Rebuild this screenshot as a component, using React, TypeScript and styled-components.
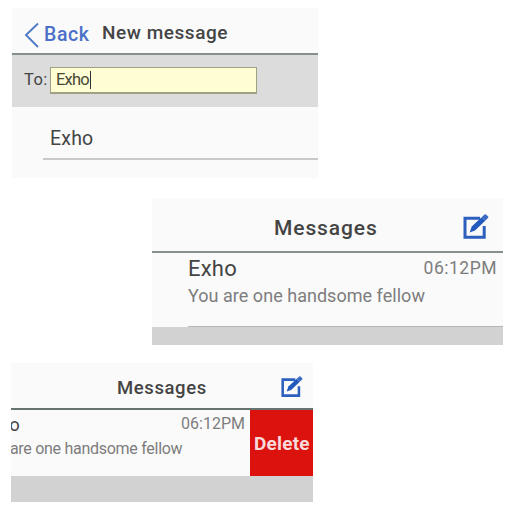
import React from 'react';
import styled, { createGlobalStyle } from 'styled-components';

const Global = createGlobalStyle`
  * { box-sizing: border-box; }
  body { margin: 0; background: #fff; font-family: Roboto, "Liberation Sans", sans-serif; }
`;

const Page = styled.main`
  width: 512px;
  height: 512px;
  padding-top: 8px;
  display: flex;
  flex-direction: column;
  overflow: hidden;
`;

const Panel = styled.section<{ $w: number; $h: number; $left: number; $gap: number }>`
  flex: none;
  display: flex;
  flex-direction: column;
  width: ${p => p.$w}px;
  height: ${p => p.$h}px;
  margin: 0 0 ${p => p.$gap}px ${p => p.$left}px;
  background: #fafafa;
  overflow: hidden;
`;

const Header = styled.header<{ $h: number; $pad: number; $line?: string }>`
  flex: none;
  display: flex;
  align-items: flex-start;
  height: ${p => p.$h}px;
  padding-left: ${p => p.$pad}px;
  border-bottom: 2px solid ${p => p.$line ?? '#858f8d'};
`;

const Label = styled.span<{
  $size: number; $space?: number; $weight?: number; $color?: string; $top?: number; $left?: number;
}>`
  flex: none;
  display: block;
  white-space: pre;
  line-height: 24px;
  font-size: ${p => p.$size}px;
  letter-spacing: ${p => p.$space ?? 0}px;
  font-weight: ${p => p.$weight ?? 400};
  color: ${p => p.$color ?? '#444'};
  margin-top: ${p => p.$top ?? 0}px;
  margin-left: ${p => p.$left ?? 0}px;
`;

const BackButton = styled.a`
  display: flex;
  align-items: flex-start;
  width: 78px;
`;

const Chevron = styled.svg`
  width: 15px;
  height: 26px;
  margin: 14px 5px 0 0;
`;

const Recipient = styled.div`
  flex: none;
  display: flex;
  height: 52px;
  padding: 12px 0 0 12px;
  background: #dcdcdc;
`;

const RecipientLabel = styled.div`
  width: 26px;
`;

const Field = styled.div`
  display: flex;
  align-items: flex-start;
  width: 207px;
  height: 27px;
  padding-left: 5px;
  border: 1.5px solid #a0a083;
  border-bottom-width: 2px;
  background: #fffdd4;
`;

const Caret = styled.i`
  width: 1px;
  height: 18px;
  margin: 3px 0 0 1px;
  background: #333;
`;

const Suggestion = styled.div`
  display: flex;
  height: 53px;
  margin-left: 31px;
  padding-left: 7px;
  border-bottom: 2px solid #c8c9c9;
`;

const Conversation = styled.div<{ $h: number }>`
  flex: none;
  display: flex;
  height: ${p => p.$h}px;
`;

const Body = styled.div<{ $shift: number; $line?: boolean }>`
  flex: 1;
  min-width: 0;
  margin-left: ${p => p.$shift}px;
  border-bottom: ${p => (p.$line ? '1px solid #b3b4b4' : 'none')};
`;

const TopLine = styled.div<{ $right: number }>`
  display: flex;
  justify-content: space-between;
  height: 27px;
  padding-right: ${p => p.$right}px;
`;

const Footer = styled.div`
  flex: 1;
  background: #d2d2d2;
`;

const DeleteButton = styled.button`
  flex: none;
  width: 63px;
  height: 67px;
  padding: 0 0 0 4px;
  border: 0;
  background: #dc120f;
  font-family: inherit;
  text-align: left;
`;

const ComposeSvg = styled.svg<{ $w: number; $top: number; $left: number }>`
  flex: none;
  width: ${p => p.$w}px;
  height: ${p => p.$w}px;
  margin: ${p => p.$top}px 0 0 ${p => p.$left}px;
`;

const Compose = (p: { $w: number; $top: number; $left: number }) => (
  <ComposeSvg viewBox="0 0 26 26" fill="none" {...p}>
    <path d="M17 4.3H2V23.2H21.2V12" stroke="#2c5fbe" strokeWidth="3" />
    <path d="M6.7 18.4L8.7 12.4L18.6 3.2L22.2 6.7L12 16.5Z" fill="#2358bd" />
    <path d="M18.6 3.2L21.5.6Q22.3 0 23 .6L25.1 2.6Q25.8 3.3 25 4.1L22.2 6.7Z" fill="#3b6bc3" />
  </ComposeSvg>
);

export default function App() {
  return (
    <>
      <Global />
      <Page>
        <Panel $w={306} $h={170} $left={12} $gap={20}>
          <Header $h={47} $pad={12}>
            <BackButton>
              <Chevron viewBox="0 0 15 26" fill="none">
                <path d="M14 1.5L2 13L14 25" stroke="#5079c7" strokeWidth="1.9" />
              </Chevron>
              <Label $size={19.5} $space={0.6} $weight={500} $color="#4c70c7" $top={15}>Back</Label>
            </BackButton>
            <Label $size={19} $space={0.55} $weight={500} $top={13}>New message</Label>
          </Header>
          <Recipient>
            <RecipientLabel><Label $size={16.5} $space={0.4} $top={1}>To:</Label></RecipientLabel>
            <Field>
              <Label $size={16.5} $space={-0.8} $color="#484835">Exho</Label>
              <Caret />
            </Field>
          </Recipient>
          <Suggestion>
            <Label $size={19.5} $space={0.2} $top={20}>Exho</Label>
          </Suggestion>
        </Panel>

        <Panel $w={351} $h={147} $left={152} $gap={18}>
          <Header $h={55} $pad={122}>
            <Label $size={21} $space={0.9} $weight={500} $top={18}>Messages</Label>
            <Compose $w={26} $top={16} $left={85} />
          </Header>
          <Conversation $h={74}>
            <Body $shift={36} $line>
              <TopLine $right={6}>
                <Label $size={22} $space={0.2} $top={4}>Exho</Label>
                <Label $size={17.5} $space={0.5} $color="#7d7d7d" $top={3}>06:12PM</Label>
              </TopLine>
              <Label $size={18} $space={0.03} $color="#7d7d7d" $top={4}>You are one handsome fellow</Label>
            </Body>
          </Conversation>
          <Footer />
        </Panel>

        <Panel $w={302} $h={139} $left={11} $gap={0}>
          <Header $h={47} $pad={106} $line="#667370">
            <Label $size={18.5} $space={0.6} $weight={500} $top={13}>Messages</Label>
            <Compose $w={22} $top={13} $left={74} />
          </Header>
          <Conversation $h={66}>
            <Body $shift={-32}>
              <TopLine $right={5}>
                <Label $size={18.5} $space={0.1} $top={3}>Exho</Label>
                <Label $size={16} $space={0} $color="#7d7d7d" $top={2}>06:12PM</Label>
              </TopLine>
              <Label $size={16} $space={-0.28} $color="#7d7d7d" $left={1}>You are one handsome fellow</Label>
            </Body>
            <DeleteButton><Label $size={19} $space={0.2} $weight={700} $color="#f8dada">Delete</Label></DeleteButton>
          </Conversation>
          <Footer />
        </Panel>
      </Page>
    </>
  );
}
